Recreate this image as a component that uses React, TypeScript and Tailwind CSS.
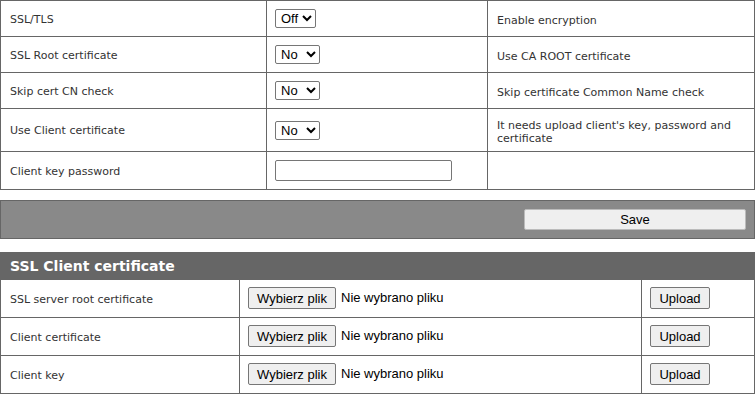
const labelFont = "font-['DejaVu_Sans',Verdana,sans-serif] text-[11px] text-[#333]";
const ctrlFont = "font-['Liberation_Sans',Arial,sans-serif] text-[13px] text-black";

const settings = [
  { label: 'SSL/TLS', kind: 'select', value: 'Off', options: ['Off', 'On'], desc: 'Enable encryption', h: 'h-[36px]' },
  { label: 'SSL Root certificate', kind: 'select', value: 'No', options: ['No', 'Yes'], desc: 'Use CA ROOT certificate', h: 'h-[36px]' },
  { label: 'Skip cert CN check', kind: 'select', value: 'No', options: ['No', 'Yes'], desc: 'Skip certificate Common Name check', h: 'h-[36px]' },
  { label: 'Use Client certificate', kind: 'select', value: 'No', options: ['No', 'Yes'], desc: "It needs upload client's key, password and certificate", h: 'h-[43px]' },
  { label: 'Client key password', kind: 'input', value: '', options: [], desc: '', h: 'h-[38px]' },
];

const uploads = ['SSL server root certificate', 'Client certificate', 'Client key'];

function Select({ value, options }: { value: string; options: string[] }) {
  return (
    <select
      defaultValue={value}
      className={`${ctrlFont} block h-[19px] border border-[#767676] rounded-[2px] bg-white pl-[1px] pr-0`}
    >
      {options.map((o) => (
        <option key={o}>{o}</option>
      ))}
    </select>
  );
}

function GrayButton({ children, className }: { children: React.ReactNode; className?: string }) {
  return (
    <button
      type="button"
      className={`${ctrlFont} h-[22px] bg-[#efefef] border border-[#767676] rounded-[2px] px-[6px] leading-none ${className ?? ''}`}
    >
      {children}
    </button>
  );
}

export default function App() {
  return (
    <div className="w-[755px] h-[394px] bg-white overflow-hidden">
      <table className="w-[755px] border-collapse table-fixed">
        <colgroup>
          <col className="w-[266px]" />
          <col className="w-[221px]" />
          <col />
        </colgroup>
        <tbody>
          {settings.map((s) => (
            <tr key={s.label} className={s.h}>
              <td className={`${labelFont} border border-[#666] pl-[9px] pt-[3px] align-middle`}>{s.label}</td>
              <td className="border border-[#666] pl-[8px] align-middle">
                {s.kind === 'select' ? (
                  <Select value={s.value} options={s.options} />
                ) : (
                  <input
                    type="password"
                    className={`${ctrlFont} block w-[177px] h-[21px] border border-[#767676] rounded-[2px] bg-white`}
                  />
                )}
              </td>
              <td className={`${labelFont} border border-[#666] pl-[9px] pr-[6px] pt-[3px] align-middle leading-[13px]`}>{s.desc}</td>
            </tr>
          ))}
        </tbody>
      </table>

      <div className="mt-[10px] h-[39px] bg-[#898989] border border-[#666] flex items-center justify-end pr-[8px]">
        <button
          type="button"
          className="w-[222px] h-[21px] bg-[#efefef] border border-[#bbb] rounded-[2px] font-['Liberation_Sans',Arial,sans-serif] text-[13px] text-black"
        >
          Save
        </button>
      </div>

      <div className="mt-[13px] h-[27px] bg-[#666] flex items-center pl-[10px] pt-[1px] font-['DejaVu_Sans',Verdana,sans-serif] font-bold text-[14px] text-white">
        SSL Client certificate
      </div>
      <table className="w-[755px] border-collapse table-fixed">
        <colgroup>
          <col className="w-[239px]" />
          <col className="w-[402px]" />
          <col />
        </colgroup>
        <tbody>
          {uploads.map((u) => (
            <tr key={u} className="h-[38px]">
              <td className={`${labelFont} border border-[#666] pl-[9px] pt-[3px] align-middle`}>{u}</td>
              <td className="border border-[#666] pl-[8px] align-middle">
                <div className="flex items-center gap-[5px] -mt-[1px]">
                  <GrayButton className="w-[88px]">Wybierz plik</GrayButton>
                  <span className={ctrlFont}>Nie wybrano pliku</span>
                </div>
              </td>
              <td className="border border-[#666] pl-[8px] align-middle">
                <GrayButton className="w-[60px] block -mt-[1px]">Upload</GrayButton>
              </td>
            </tr>
          ))}
        </tbody>
      </table>
    </div>
  );
}
